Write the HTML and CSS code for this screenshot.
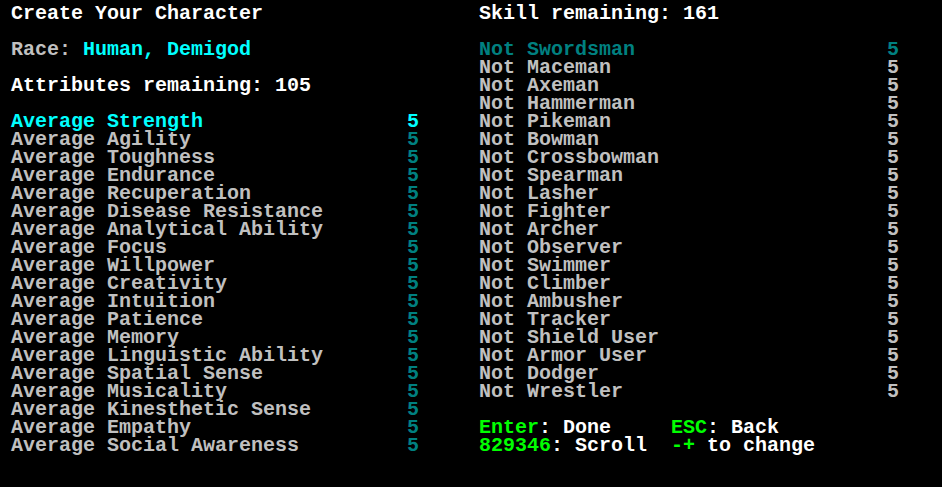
FILE: index.html
```html
<!DOCTYPE html>
<html>
<head>
<meta charset="utf-8">
<link rel="stylesheet" href="styles.css">
</head>
<body>
<div class="screen">
  <div class="col left">
    <div class="line white">Create Your Character</div>
    <div class="line"></div>
    <div class="line grey">Race: <span class="cyan">Human, Demigod</span></div>
    <div class="line"></div>
    <div class="line white">Attributes remaining: 105</div>
    <div class="line"></div>
    <div class="row attr sel"><span class="name">Average Strength</span><span class="val">5</span></div>
    <div class="row attr"><span class="name">Average Agility</span><span class="val">5</span></div>
    <div class="row attr"><span class="name">Average Toughness</span><span class="val">5</span></div>
    <div class="row attr"><span class="name">Average Endurance</span><span class="val">5</span></div>
    <div class="row attr"><span class="name">Average Recuperation</span><span class="val">5</span></div>
    <div class="row attr"><span class="name">Average Disease Resistance</span><span class="val">5</span></div>
    <div class="row attr"><span class="name">Average Analytical Ability</span><span class="val">5</span></div>
    <div class="row attr"><span class="name">Average Focus</span><span class="val">5</span></div>
    <div class="row attr"><span class="name">Average Willpower</span><span class="val">5</span></div>
    <div class="row attr"><span class="name">Average Creativity</span><span class="val">5</span></div>
    <div class="row attr"><span class="name">Average Intuition</span><span class="val">5</span></div>
    <div class="row attr"><span class="name">Average Patience</span><span class="val">5</span></div>
    <div class="row attr"><span class="name">Average Memory</span><span class="val">5</span></div>
    <div class="row attr"><span class="name">Average Linguistic Ability</span><span class="val">5</span></div>
    <div class="row attr"><span class="name">Average Spatial Sense</span><span class="val">5</span></div>
    <div class="row attr"><span class="name">Average Musicality</span><span class="val">5</span></div>
    <div class="row attr"><span class="name">Average Kinesthetic Sense</span><span class="val">5</span></div>
    <div class="row attr"><span class="name">Average Empathy</span><span class="val">5</span></div>
    <div class="row attr"><span class="name">Average Social Awareness</span><span class="val">5</span></div>
  </div>
  <div class="col right">
    <div class="line white">Skill remaining: 161</div>
    <div class="line"></div>
    <div class="row skill sel"><span class="name">Not Swordsman</span><span class="val">5</span></div>
    <div class="row skill"><span class="name">Not Maceman</span><span class="val">5</span></div>
    <div class="row skill"><span class="name">Not Axeman</span><span class="val">5</span></div>
    <div class="row skill"><span class="name">Not Hammerman</span><span class="val">5</span></div>
    <div class="row skill"><span class="name">Not Pikeman</span><span class="val">5</span></div>
    <div class="row skill"><span class="name">Not Bowman</span><span class="val">5</span></div>
    <div class="row skill"><span class="name">Not Crossbowman</span><span class="val">5</span></div>
    <div class="row skill"><span class="name">Not Spearman</span><span class="val">5</span></div>
    <div class="row skill"><span class="name">Not Lasher</span><span class="val">5</span></div>
    <div class="row skill"><span class="name">Not Fighter</span><span class="val">5</span></div>
    <div class="row skill"><span class="name">Not Archer</span><span class="val">5</span></div>
    <div class="row skill"><span class="name">Not Observer</span><span class="val">5</span></div>
    <div class="row skill"><span class="name">Not Swimmer</span><span class="val">5</span></div>
    <div class="row skill"><span class="name">Not Climber</span><span class="val">5</span></div>
    <div class="row skill"><span class="name">Not Ambusher</span><span class="val">5</span></div>
    <div class="row skill"><span class="name">Not Tracker</span><span class="val">5</span></div>
    <div class="row skill"><span class="name">Not Shield User</span><span class="val">5</span></div>
    <div class="row skill"><span class="name">Not Armor User</span><span class="val">5</span></div>
    <div class="row skill"><span class="name">Not Dodger</span><span class="val">5</span></div>
    <div class="row skill"><span class="name">Not Wrestler</span><span class="val">5</span></div>
    <div class="line"></div>
    <div class="row keys"><span class="key-a"><span class="green">Enter</span>: Done</span><span><span class="green">ESC</span>: Back</span></div>
    <div class="row keys"><span class="key-a"><span class="green">829346</span>: Scroll</span><span><span class="green">-+</span> to change</span></div>
  </div>
</div>
</body>
</html>
```
FILE: styles.css
```css
html, body {
  margin: 0;
  padding: 0;
  background: #000;
}
body {
  font-family: "Liberation Mono", "DejaVu Sans Mono", monospace;
  font-weight: bold;
  font-size: 20px;
  line-height: 18px;
  color: #c0c0c0;
  width: 942px;
  height: 487px;
  overflow: hidden;
}
.screen {
  display: flex;
  padding: 5px 0 0 11px;
}
.col {
  display: flex;
  flex-direction: column;
}
.left {
  width: 468px;
}
.right {
  width: 450px;
}
.line, .row {
  height: 18px;
  white-space: pre;
}
.row {
  display: flex;
}
.row .name {
  width: 396px;
}
.skill .name {
  width: 408px;
}
.white { color: #ffffff; }
.grey { color: #c0c0c0; }
.cyan { color: #00ffff; }
.green { color: #00ff00; }
.attr { color: #c0c0c0; }
.attr .val { color: #008080; }
.attr.sel, .attr.sel .val { color: #00ffff; }
.skill { color: #c0c0c0; }
.skill.sel, .skill.sel .val { color: #008080; }
.keys { color: #ffffff; }
.keys .key-a { width: 192px; }
```
